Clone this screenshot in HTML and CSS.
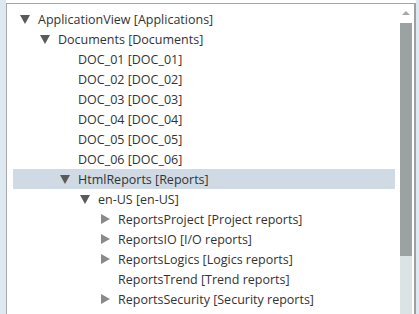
FILE: index.html
```html
<!DOCTYPE html>
<html lang="en">
<head>
    <meta charset="UTF-8">
    <title>Application tree</title>
    <link rel="stylesheet" href="styles.css">
</head>
<body>

    <div class="window">
        <div class="side"></div>

        <div class="panel">
            <ul class="tree">
                <li class="row lvl0"><span class="toggle open"></span>ApplicationView [Applications]</li>
                <li class="row lvl1"><span class="toggle open"></span>Documents [Documents]</li>
                <li class="row lvl2"><span class="toggle"></span>DOC_01 [DOC_01]</li>
                <li class="row lvl2"><span class="toggle"></span>DOC_02 [DOC_02]</li>
                <li class="row lvl2"><span class="toggle"></span>DOC_03 [DOC_03]</li>
                <li class="row lvl2"><span class="toggle"></span>DOC_04 [DOC_04]</li>
                <li class="row lvl2"><span class="toggle"></span>DOC_05 [DOC_05]</li>
                <li class="row lvl2"><span class="toggle"></span>DOC_06 [DOC_06]</li>
                <li class="row lvl2 selected"><span class="toggle open"></span>HtmlReports [Reports]</li>
                <li class="row lvl3"><span class="toggle open"></span>en-US [en-US]</li>
                <li class="row lvl4"><span class="toggle closed"></span>ReportsProject [Project reports]</li>
                <li class="row lvl4"><span class="toggle closed"></span>ReportsIO [I/O reports]</li>
                <li class="row lvl4"><span class="toggle closed"></span>ReportsLogics [Logics reports]</li>
                <li class="row lvl4"><span class="toggle"></span>ReportsTrend [Trend reports]</li>
                <li class="row lvl4"><span class="toggle closed"></span>ReportsSecurity [Security reports]</li>
            </ul>

            <!-- Barra de desplazamiento -->
            <div class="scrollbar">
                <div class="arrow"></div>
                <div class="track">
                    <div class="thumb"></div>
                </div>
            </div>
        </div>

        <div class="side right"></div>
    </div>

</body>
</html>
```

FILE: styles.css
```css
* {
    margin: 0;
    padding: 0;
    box-sizing: border-box;
}

body {
    background: #fff;
    font-family: "Open Sans", "Noto Sans", sans-serif;
    font-size: 12.5px;
    color: #333;
    overflow: hidden;
}

.window {
    display: flex;
    height: 314px;
}

.side {
    width: 6px;
    background-color: #dde8f1;
}

.side.right {
    width: 3px;
}

.panel {
    flex: 1;
    display: flex;
    margin-top: 3px;
    border-top: 1px solid #a3a3a3;
    border-left: 1px solid #a8a8a8;
    border-right: 2px solid #a0a0a0;
    overflow: hidden;
}

.tree {
    flex: 1;
    list-style: none;
    padding: 5px 3px 0 6px;
}

.row {
    display: flex;
    align-items: center;
    height: 20px;
    white-space: nowrap;
    padding-left: 7px;
}

.lvl1 { padding-left: 27px; }
.lvl2 { padding-left: 47px; }
.lvl3 { padding-left: 67px; }
.lvl4 { padding-left: 87px; }

.row.selected {
    background-color: #cfdae4;
}

.toggle {
    width: 18px;
    height: 20px;
    position: relative;
    flex-shrink: 0;
}

/* Triangulos */
.toggle.open::before {
    content: "";
    position: absolute;
    left: 0;
    top: 6px;
    border-left: 5px solid transparent;
    border-right: 5px solid transparent;
    border-top: 9px solid #5a5a5a;
}

.toggle.closed::before {
    content: "";
    position: absolute;
    left: 1px;
    top: 5px;
    border-top: 5px solid transparent;
    border-bottom: 5px solid transparent;
    border-left: 9px solid #8a8a8a;
}

.scrollbar {
    width: 16px;
    display: flex;
    flex-direction: column;
    padding: 0 2px 0 2px;
}

.arrow {
    height: 19px;
    position: relative;
}

.arrow::before {
    content: "";
    position: absolute;
    left: 2px;
    top: 7px;
    border-left: 4px solid transparent;
    border-right: 4px solid transparent;
    border-bottom: 4px solid #a7a7a7;
}

.track {
    flex: 1;
    background-color: #dbe3e5;
}

.thumb {
    height: 233px;
    background-color: #9ca1a2;
}
```
